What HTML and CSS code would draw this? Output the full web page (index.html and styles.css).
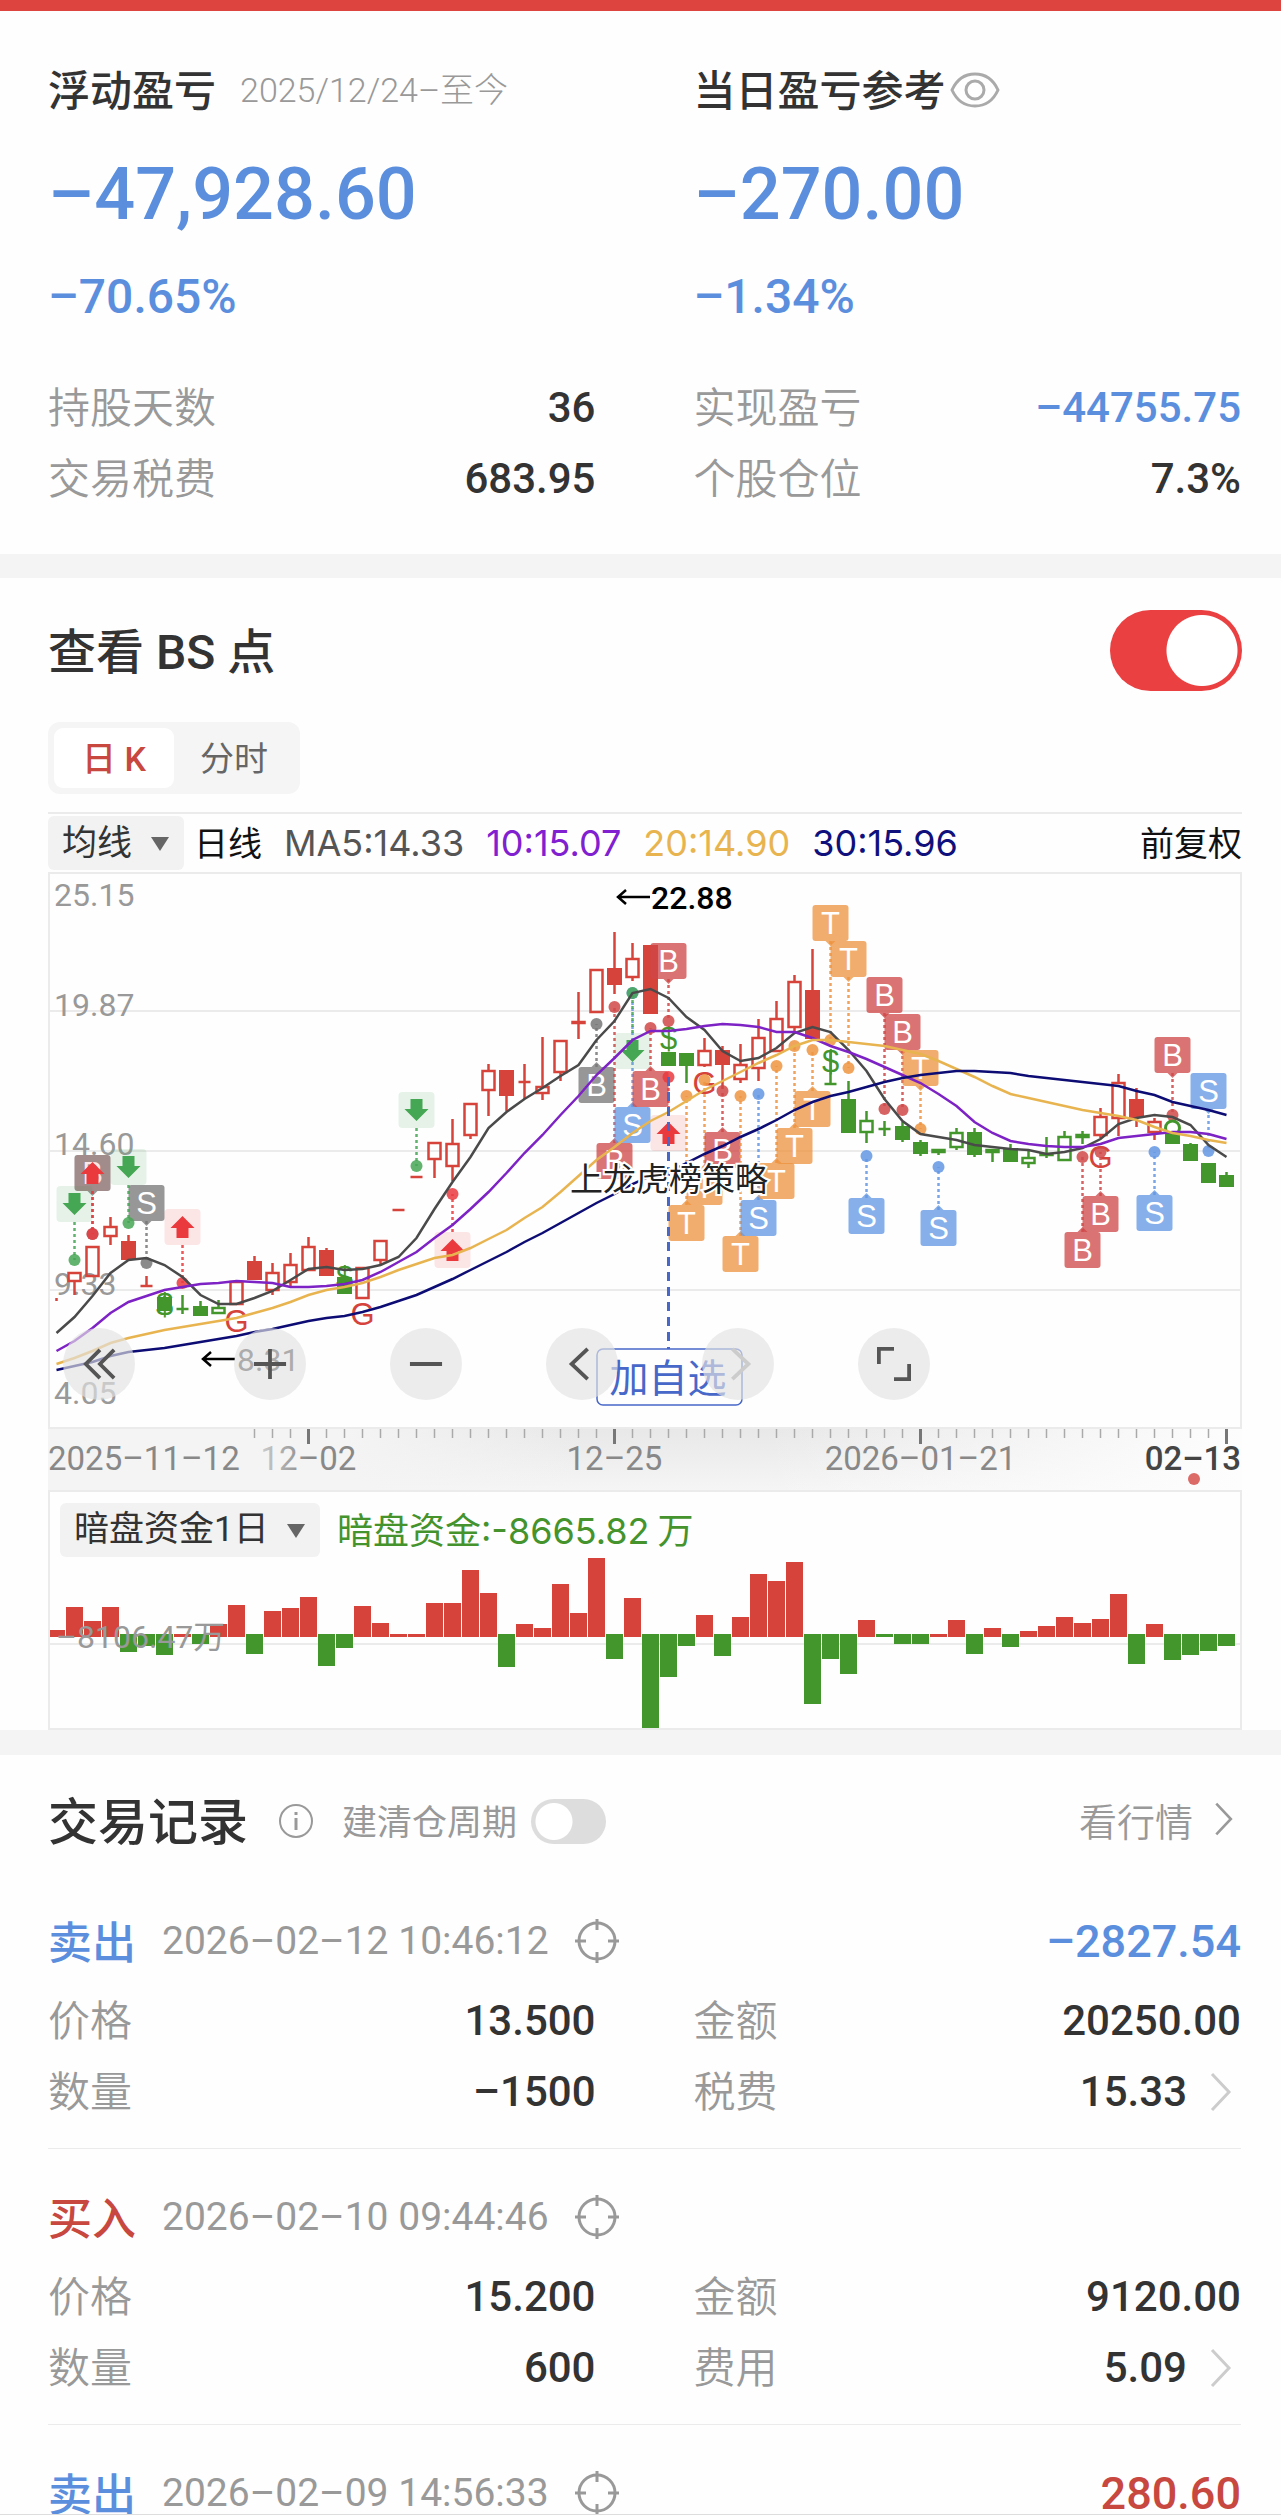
FILE: index.html
```html
<!DOCTYPE html>
<html lang="zh-CN">
<head>
<meta charset="UTF-8">
<meta name="viewport" content="width=device-width, initial-scale=1.0">
<title>个股盈亏</title>
<link rel="stylesheet" href="styles.css">
</head>
<body>

<svg width="0" height="0" class="symbols" aria-hidden="true">
  <symbol id="icon-target" viewBox="0 0 44 44">
    <g fill="none" stroke="#999" stroke-width="3">
      <circle cx="22" cy="22" r="18"/>
      <path d="M22 0v11M22 33v11M0 22h11M33 22h11"/>
    </g>
  </symbol>
  <symbol id="icon-next" viewBox="0 0 24 42">
    <path d="M3 3l17 18L3 39" fill="none" stroke="currentColor" stroke-width="3"/>
  </symbol>
</svg>

<div class="app">
  <div class="top-bar"></div>

  <!-- Profit and loss -->
  <section class="summary">
    <div class="summary-col">
      <div class="summary-title"><h2>浮动盈亏</h2><span class="period">2025/12/24–至今</span></div>
      <div class="amount">–47,928.60</div>
      <div class="percent">–70.65%</div>
      <div class="row"><span class="label">持股天数</span><span class="value">36</span></div>
      <div class="row"><span class="label">交易税费</span><span class="value">683.95</span></div>
    </div>
    <div class="summary-col">
      <div class="summary-title">
        <h2>当日盈亏参考</h2>
        <button class="icon-button eye" aria-label="显示金额">
          <svg width="50" height="36" viewBox="0 0 50 36" fill="none" stroke="#aaa" stroke-width="3">
            <path d="M2 18C7 7 15 2 25 2s18 5 23 16c-5 11-13 16-23 16S7 29 2 18z"/>
            <circle cx="25" cy="18" r="9"/>
          </svg>
        </button>
      </div>
      <div class="amount">–270.00</div>
      <div class="percent">–1.34%</div>
      <div class="row"><span class="label">实现盈亏</span><span class="value down">–44755.75</span></div>
      <div class="row"><span class="label">个股仓位</span><span class="value">7.3%</span></div>
    </div>
  </section>

  <!-- Chart -->
  <section class="chart-section">
    <div class="chart-title">
      <h2 id="bsTitle">查看 BS 点</h2>
      <input type="checkbox" class="switch" aria-labelledby="bsTitle" checked>
    </div>
    <div class="tabs">
      <button class="tab active">日 K</button>
      <button class="tab">分时</button>
    </div>

    <div class="legend">
      <div class="dropdown">
        <select aria-label="指标"><option>均线</option></select>
      </div>
      <span class="legend-name">日线</span>
      <span class="ma5">MA5:14.33</span>
      <span class="ma10">10:15.07</span>
      <span class="ma20">20:14.90</span>
      <span class="ma30">30:15.96</span>
      <span class="adjust">前复权</span>
    </div>

    <div class="kline">
      <svg id="kline" viewBox="0 0 1194 557"></svg>
      <div class="controls">
        <button aria-label="最早"><svg viewBox="0 0 36 36"><path d="M19 3L4 18l15 15M34 3L19 18l15 15"/></svg></button>
        <button aria-label="放大"><svg viewBox="0 0 36 36"><path d="M18 2v32M1 18h34"/></svg></button>
        <button aria-label="缩小"><svg viewBox="0 0 36 36"><path d="M1 18h34"/></svg></button>
        <button aria-label="左移"><svg viewBox="0 0 36 36"><path d="M24 2L7 18l17 16"/></svg></button>
        <button aria-label="右移" class="disabled"><svg viewBox="0 0 36 36"><path d="M12 2l17 16-17 16"/></svg></button>
        <button aria-label="全屏"><svg viewBox="0 0 36 36"><path d="M2 18V2h16M18 34h16V18"/></svg></button>
      </div>
    </div>
    <div class="axis"><svg id="axis" viewBox="0 0 1194 61"></svg></div>

    <div class="fund">
      <div class="fund-legend">
        <div class="dropdown">
          <select aria-label="资金指标"><option>暗盘资金1日</option></select>
        </div>
        <span class="fund-value">暗盘资金:-8665.82<span class="unit">万</span></span>
      </div>
      <svg id="fund" viewBox="0 0 1194 173"></svg>
    </div>
  </section>

  <!-- Trade records -->
  <section class="records">
    <div class="records-title">
      <h2>交易记录</h2>
      <svg class="info" width="36" height="36" viewBox="0 0 36 36" fill="none" stroke="#999">
        <circle cx="18" cy="18" r="16" stroke-width="2"/>
        <path d="M18 15v12M18 9v3" stroke-width="3"/>
      </svg>
      <label class="cycle" for="cycle">建清仓周期</label>
      <input type="checkbox" class="switch small" id="cycle">
      <a class="quote" href="#">看行情 <svg width="22" height="36"><use href="#icon-next"/></svg></a>
    </div>

    <article class="record">
      <div class="record-head">
        <span class="side sell">卖出</span>
        <span class="time">2026–02–12 10:46:12</span>
        <svg width="44" height="44"><use href="#icon-target"/></svg>
        <span class="profit down">–2827.54</span>
      </div>
      <div class="record-body">
        <div class="row"><span class="label">价格</span><span class="value">13.500</span></div>
        <div class="row"><span class="label">金额</span><span class="value">20250.00</span></div>
        <div class="row"><span class="label">数量</span><span class="value">–1500</span></div>
        <div class="row"><span class="label">税费</span><span class="value">15.33</span><svg class="more" width="24" height="42"><use href="#icon-next"/></svg></div>
      </div>
    </article>

    <article class="record">
      <div class="record-head">
        <span class="side buy">买入</span>
        <span class="time">2026–02–10 09:44:46</span>
        <svg width="44" height="44"><use href="#icon-target"/></svg>
      </div>
      <div class="record-body">
        <div class="row"><span class="label">价格</span><span class="value">15.200</span></div>
        <div class="row"><span class="label">金额</span><span class="value">9120.00</span></div>
        <div class="row"><span class="label">数量</span><span class="value">600</span></div>
        <div class="row"><span class="label">费用</span><span class="value">5.09</span><svg class="more" width="24" height="42"><use href="#icon-next"/></svg></div>
      </div>
    </article>

    <article class="record">
      <div class="record-head">
        <span class="side sell">卖出</span>
        <span class="time">2026–02–09 14:56:33</span>
        <svg width="44" height="44"><use href="#icon-target"/></svg>
        <span class="profit up">280.60</span>
      </div>
    </article>
  </section>
</div>

<script src="chart.js"></script>
</body>
</html>
```
FILE: styles.css
```css
* {
  box-sizing: border-box;
}
body {
  margin: 0;
  background-color: #fefefe;
  color: #333;
  font-family: Roboto, "Noto Sans CJK SC", sans-serif;
}
h2 {
  margin: 0;
  padding-bottom: 6px;
  font-weight: 500;
}
button,
select {
  margin: 0;
  border: none;
  color: inherit;
  font-family: inherit;
  cursor: pointer;
}
svg {
  display: block;
}
.symbols {
  position: absolute;
}
.app {
  height: 100vh;
  overflow-y: auto;
  scrollbar-width: none;
  border-bottom: 1px solid #ddd;
}
.top-bar {
  height: 11px;
  background-color: #dd4440;
}

/* Shared label / value rows */
.row {
  display: flex;
  align-items: center;
  height: 71px;
  font-size: 42px;
}
.label {
  padding-bottom: 6px;
  color: #999;
  font-weight: 350;
}
.value {
  margin-left: auto;
  font-weight: 500;
}
.down,
.sell {
  color: #5b8fde;
}
.up,
.buy {
  color: #c8473f;
}

/* Summary */
.summary {
  display: grid;
  grid-template-columns: 1fr 1fr;
  gap: 98px;
  padding: 49px 40px 40px 48px;
  border-bottom: 24px solid #f4f4f4;
}
.summary-title {
  display: flex;
  align-items: center;
  height: 60px;
}
.summary-title h2 {
  font-size: 42px;
}
.period {
  margin-left: 24px;
  padding-bottom: 5px;
  color: #999;
  font-size: 34px;
  font-weight: 300;
}
.icon-button {
  padding: 0;
  background: none;
}
.eye {
  margin-left: 4px;
}
.amount {
  margin: 33px 0 30px;
  color: #5b8fde;
  font-size: 72px;
  font-weight: 500;
  line-height: 84px;
}
.percent {
  margin-bottom: 45px;
  color: #5b8fde;
  font-size: 48px;
  font-weight: 500;
  line-height: 60px;
}

/* Switches */
.switch {
  appearance: none;
  flex: none;
  width: 132px;
  height: 81px;
  margin: 0;
  border-radius: 41px;
  background: radial-gradient(circle at 92px 50%, #fff 35px, transparent 36px) #ea4041;
}
.switch.small {
  width: 75px;
  height: 45px;
  margin-left: 14px;
  border-radius: 23px;
  background: radial-gradient(circle at 23px 50%, #fff 18px, transparent 19px) #ddd;
}

/* Chart */
.chart-section {
  padding: 32px 39px 0 48px;
  border-bottom: 25px solid #f4f4f4;
}
.chart-title {
  display: flex;
  align-items: center;
  justify-content: space-between;
}
.chart-title h2 {
  font-size: 48px;
}
.tabs {
  display: inline-flex;
  height: 72px;
  margin: 31px 0 18px;
  padding: 6px;
  border-radius: 12px;
  background-color: #f5f5f5;
  vertical-align: top;
}
.tab {
  width: 120px;
  padding: 0 0 3px;
  border-radius: 9px;
  background: none;
  color: #666;
  font-size: 34px;
}
.tab.active {
  background-color: #fff;
  color: #c8473f;
  font-weight: 500;
}
.legend {
  display: flex;
  align-items: center;
  height: 60px;
  border-top: 2px solid #ebebeb;
  color: #111;
  font-size: 34px;
  white-space: nowrap;
}
.dropdown {
  position: relative;
}
.dropdown::after {
  content: "";
  position: absolute;
  top: 21px;
  right: 15px;
  border: 9px solid transparent;
  border-top: 14px solid #666;
  border-bottom: none;
  pointer-events: none;
}
.dropdown select {
  appearance: none;
  height: 54px;
  padding: 0 51px 0 14px;
  border-radius: 6px;
  background-color: #f2f2f2;
  color: #333;
  font-size: 35px;
}
.legend-name {
  margin: 0 22px 0 10px;
}
.legend-name,
.adjust {
  padding-bottom: 4px;
}
.ma5,
.ma10,
.ma20,
.ma30 {
  margin-right: 22px;
  font-family: Inter, sans-serif;
  font-size: 36px;
}
.ma5 { color: #555; }
.ma10 { color: #8020d0; }
.ma20 { color: #e8b450; }
.ma30 { color: #10107c; }
.adjust {
  margin-left: auto;
}
.kline {
  position: relative;
}
.kline,
.fund {
  outline: 2px solid #ebebeb;
  outline-offset: -2px;
}
.kline > svg,
.axis svg,
.fund > svg {
  width: 100%;
}
.controls {
  position: absolute;
  left: 15px;
  bottom: 29px;
  display: flex;
  gap: 84px;
}
.controls button {
  display: grid;
  place-items: center;
  width: 72px;
  height: 72px;
  padding: 0;
  border-radius: 50%;
  background-color: rgba(226, 226, 226, 0.66);
}
.controls button:first-child {
  margin-right: 15px;
}
.controls svg {
  width: 34px;
  height: 34px;
  fill: none;
  stroke: #555;
  stroke-width: 4;
}
.controls .disabled svg {
  stroke: #ccc;
}
.axis {
  background: linear-gradient(90deg, #f4f4f4 25%, rgba(244, 244, 244, 0) 45% 60%, #fdfdfd), linear-gradient(#e8e8e8, #f5f5f5);
}
.fund-legend {
  display: flex;
  align-items: center;
  height: 67px;
  padding: 12px 12px 0;
}
.fund-value {
  margin-left: 17px;
  padding-bottom: 3px;
  color: #44932c;
  font-family: Inter, "Noto Sans CJK SC", sans-serif;
  font-size: 36px;
}
.unit {
  margin-left: 8px;
}

/* Records */
.records {
  padding: 36px 40px 0 48px;
}
.records-title {
  display: flex;
  align-items: center;
  height: 60px;
  margin-bottom: 22px;
}
.records-title h2 {
  font-size: 50px;
}
.info {
  margin-left: 30px;
}
.cycle {
  margin-left: 28px;
  padding-bottom: 4px;
  color: #999;
  font-size: 35px;
}
.quote {
  display: flex;
  align-items: center;
  gap: 20px;
  margin: 0 6px 0 auto;
  padding-bottom: 4px;
  color: #999;
  font-size: 38px;
  font-weight: 350;
  text-decoration: none;
}
.record {
  padding: 44px 0 21px;
  border-bottom: 1px solid #ebebeb;
}
.record:last-child {
  padding-bottom: 0;
  border-bottom: none;
}
.record-head {
  display: flex;
  align-items: center;
  height: 48px;
}
.side {
  padding-bottom: 3px;
  font-size: 44px;
  font-weight: 500;
}
.time {
  margin: 0 26px;
  color: #999;
  font-size: 39px;
}
.profit {
  margin-left: auto;
  font-size: 45px;
  font-weight: 500;
}
.record-body {
  display: grid;
  grid-template-columns: 1fr 1fr;
  column-gap: 98px;
  margin-top: 20px;
}
.more {
  margin: 0 8px 0 22px;
  color: #ccc;
}

/* SVG text */
.scale {
  fill: #999;
  font-size: 32px;
}
.date {
  fill: #888;
  font-size: 33px;
}
.date.last {
  fill: #444;
  font-weight: 500;
}
.peak {
  font-size: 32px;
  font-weight: 500;
}
.tag,
.sign {
  font-family: "Liberation Sans", sans-serif;
  font-size: 31px;
  text-anchor: middle;
}
.tag {
  fill: #fff;
}
.strategy {
  fill: #222;
  stroke: #fff;
  stroke-width: 4;
  paint-order: stroke;
  font-size: 33px;
  text-anchor: middle;
}
.watch {
  fill: #4767c9;
  font-size: 39px;
  text-anchor: middle;
}
```
FILE: chart.js
```javascript
var RED = "#d5433b";
var GREEN = "#43962b";
var STEP = 18;

function cx(i) {
  return 8.5 + i * STEP;
}

// [colour, filled, high, top, bottom, low]
var candles = [
  ["r", 0, 424, 424, 426, 429], ["r", 0, 400, 400, 410, 423], ["r", 0, 374, 374, 405, 405],
  ["r", 0, 345, 354, 365, 373], ["r", 1, 363, 369, 388, 388], ["r", 0, 404, 414, 415, 415],
  ["g", 1, 424, 425, 439, 439], ["g", 0, 423, 437, 438, 442], ["g", 1, 429, 434, 444, 444],
  ["g", 0, 428, 435, 442, 442], ["r", 0, 409, 409, 433, 433], ["r", 1, 384, 389, 408, 408],
  ["r", 0, 391, 400, 419, 423], ["r", 0, 381, 392, 411, 415], ["r", 0, 365, 374, 399, 399],
  ["r", 1, 376, 378, 404, 404], ["g", 1, 405, 405, 422, 422], ["r", 0, 395, 395, 427, 427],
  ["r", 0, 368, 368, 389, 393], ["r", 0, 338, 338, 339, 339], ["r", 0, 305, 305, 306, 306],
  ["r", 0, 270, 270, 288, 306], ["r", 0, 247, 271, 295, 309], ["r", 0, 231, 231, 264, 267],
  ["r", 0, 192, 198, 219, 244], ["r", 1, 198, 198, 224, 239], ["r", 0, 192, 210, 211, 227],
  ["r", 0, 165, 214, 222, 228], ["r", 0, 168, 168, 201, 209], ["r", 0, 120, 149, 152, 167],
  ["r", 0, 97, 97, 141, 141], ["r", 1, 60, 96, 113, 122], ["r", 0, 71, 86, 106, 109],
  ["r", 1, 73, 73, 142, 142], ["g", 1, 180, 180, 194, 194], ["g", 1, 181, 181, 194, 211],
  ["r", 0, 166, 178, 194, 195], ["r", 1, 174, 178, 193, 217], ["r", 0, 172, 192, 208, 211],
  ["r", 0, 147, 165, 197, 209], ["r", 0, 129, 146, 180, 180], ["r", 0, 103, 109, 156, 161],
  ["r", 1, 77, 118, 167, 167], ["g", 0, 178, 212, 213, 213], ["g", 1, 209, 227, 261, 261],
  ["g", 0, 239, 248, 261, 271], ["g", 0, 249, 257, 258, 264], ["g", 1, 250, 254, 268, 270],
  ["g", 1, 268, 270, 282, 284], ["g", 0, 277, 277, 281, 283], ["g", 0, 256, 260, 276, 278],
  ["g", 1, 256, 260, 283, 285], ["g", 0, 277, 277, 281, 290], ["g", 1, 272, 276, 290, 290],
  ["g", 0, 279, 285, 292, 296], ["g", 0, 265, 281, 284, 286], ["g", 0, 259, 264, 289, 289],
  ["g", 0, 259, 262, 266, 272], ["r", 0, 236, 244, 264, 266], ["r", 0, 202, 210, 247, 264],
  ["r", 1, 216, 227, 246, 255], ["r", 0, 246, 249, 261, 268], ["g", 1, 261, 261, 272, 272],
  ["g", 1, 271, 272, 289, 289], ["g", 1, 291, 291, 311, 311], ["g", 1, 300, 303, 315, 315]
];

var averages = [
  ["#4a4a4a", [461, 445, 424, 401, 388, 386, 393, 405, 423, 432, 432, 426, 419, 408, 397, 395, 398, 397, 393, 385, 366, 337, 310, 285, 256, 240, 227, 216, 204, 193, 168, 149, 121, 117, 126, 145, 158, 179, 189, 186, 176, 161, 155, 160, 178, 199, 227, 249, 262, 265, 268, 273, 275, 277, 278, 282, 280, 276, 267, 252, 246, 243, 245, 253, 273, 285]],
  ["#7d22c4", [479, 469, 456, 441, 430, 424, 418, 415, 412, 411, 409, 410, 411, 415, 415, 414, 412, 408, 400, 390, 380, 366, 353, 337, 320, 301, 281, 263, 243, 224, 203, 186, 168, 159, 159, 157, 154, 152, 153, 155, 160, 160, 166, 174, 180, 187, 195, 203, 211, 222, 234, 250, 261, 269, 272, 274, 275, 275, 272, 266, 264, 262, 260, 260, 262, 267]],
  ["#e8b450", [492, 486, 479, 471, 466, 462, 458, 455, 452, 449, 446, 441, 436, 430, 423, 418, 415, 411, 405, 398, 392, 386, 383, 376, 367, 358, 346, 335, 320, 304, 288, 275, 261, 249, 240, 229, 218, 209, 200, 191, 183, 174, 168, 168, 170, 172, 174, 178, 182, 189, 197, 205, 214, 222, 226, 230, 234, 238, 241, 244, 248, 255, 261, 264, 268, 271]],
  ["#0c0c74", [498, 494, 490, 484, 480, 478, 476, 473, 470, 467, 464, 460, 457, 453, 449, 446, 444, 440, 435, 429, 423, 415, 407, 398, 389, 380, 370, 361, 351, 341, 331, 322, 312, 304, 300, 291, 282, 274, 265, 257, 248, 238, 230, 224, 220, 215, 210, 206, 203, 201, 199, 199, 200, 201, 204, 206, 208, 210, 212, 214, 219, 223, 230, 234, 238, 243]]
];

// [index, kind, box centre, dot centre]
var markers = [
  [2, "X", 301, 362], [5, "Y", 331, 391], [1, "down", 332, 388], [2, "up", 301, 362],
  [4, "down", 295, 351], [7, "up", 355, 411], [20, "down", 238, 294], [22, "up", 378, 322],
  [30, "X", 213, 152], [31, "B", 289, 135], [32, "S", 253, 121], [32, "down", 179, 121],
  [33, "B", 217, 156], [34, "B", 89, 149], [34, "up", 261, 205], [36, "T", 315, 208],
  [35, "T", 351, 224], [37, "B", 278, 219], [38, "T", 382, 224], [39, "S", 346, 222],
  [40, "T", 309, 194], [41, "T", 274, 174], [42, "T", 237, 178], [43, "T", 51, 168],
  [44, "T", 87, 196], [45, "S", 344, 284], [46, "B", 123, 237], [47, "B", 160, 238],
  [48, "T", 196, 257], [49, "S", 356, 295], [57, "B", 378, 285], [58, "B", 342, 280],
  [61, "S", 341, 280], [62, "B", 183, 243], [64, "S", 219, 279]
];
var kinds = {
  B: ["B", "#d04848"],
  S: ["S", "#6397e4"],
  T: ["T", "#ee9440"],
  X: ["B", "#777"],
  Y: ["S", "#777"]
};

// [index, glyph, centre]
var signs = [
  [6, "$", 432], [10, "G", 449], [16, "$", 405], [17, "G", 442], [34, "$", 166],
  [36, "G", 211], [43, "$", 189], [58, "G", 285]
];

var funds = [7, 30, 16, 30, -18, -12, -21, 3, -10, 13, 32, -20, 26, 29, 40, -32, -14, 31, 14, 3, 3, 34, 34, 67, 44, -33, 13, 9, 53, 24, 79, -25, 39, -96, -43, -12, 22, -22, 20, 63, 56, 75, -70, -25, -40, 17, -3, -10, -10, 3, 17, -20, 9, -13, 6, 11, 20, 14, 18, 43, -30, 13, -26, -21, -17, -12];

function line(x1, y1, x2, y2, attrs) {
  return '<line x1="' + x1 + '" y1="' + y1 + '" x2="' + x2 + '" y2="' + y2 + '" ' + attrs + '/>';
}

function rect(x, y, w, h, attrs) {
  return '<rect x="' + x + '" y="' + y + '" width="' + w + '" height="' + h + '" ' + attrs + '/>';
}

function text(x, y, cls, value, attrs) {
  return '<text x="' + x + '" y="' + y + '" class="' + cls + '" ' + (attrs || "") + '>' + value + '</text>';
}

function drawCandle(c, i) {
  var color = c[0] === "r" ? RED : GREEN;
  var stroke = 'stroke="' + color + '" stroke-width="2.5"';
  var x = cx(i);
  var out = line(x, c[2], x, c[3], stroke) + line(x, c[4], x, c[5], stroke);
  if (c[1]) {
    return out + rect(x - 7.5, c[3], 15, c[4] - c[3], 'fill="' + color + '"');
  }
  if (c[4] - c[3] < 2) {
    return out + line(x - 6, c[3], x + 6, c[3], stroke);
  }
  return out + rect(x - 6, c[3] + 1, 12, c[4] - c[3] - 2, 'fill="none" ' + stroke);
}

function drawMarker(m) {
  var x = cx(m[0]);
  var y = m[2];
  var arrow = m[1] === "up" || m[1] === "down";
  var color = arrow ? (m[1] === "up" ? "#ea3a3e" : "#45a653") : kinds[m[1]][1];
  var dir = m[3] > y ? 1 : -1;
  var edge = y + 18 * dir;
  var out = line(x, edge, x, m[3], 'stroke="' + color + '" stroke-width="2.5" stroke-dasharray="3 3" opacity="0.85"');
  out += '<circle cx="' + x + '" cy="' + m[3] + '" r="6" fill="' + color + '" opacity="0.85"/>';
  if (arrow) {
    var up = m[1] === "up" ? -1 : 1;
    out += rect(x - 18, y - 18, 36, 36, 'rx="4" fill="' + color + '" opacity="0.13"');
    out += '<path fill="' + color + '" d="M' + (x - 6) + ' ' + (y - 11 * up) + 'h12v' + 10 * up + 'h6l-12 ' + 12 * up + 'l-12 ' + -12 * up + 'h6z"/>';
    return out;
  }
  out += '<g fill="' + color + '" opacity="0.76">' + rect(x - 18, y - 18, 36, 36, 'rx="3"');
  out += '<path d="M' + (x - 5) + ' ' + edge + 'h10l-5 ' + 5 * dir + 'z"/></g>';
  return out + text(x, y + 11, "tag", kinds[m[1]][0]);
}

function drawKline() {
  var out = "";
  [139, 279, 418].forEach(function (y) {
    out += line(0, y, 1194, y, 'stroke="#ebebeb" stroke-width="2"');
  });
  [["25.15", 34], ["19.87", 144], ["14.60", 283], ["9.33", 423], ["4.05", 532]].forEach(function (s) {
    out += text(6, s[1], "scale", s[0]);
  });

  out += candles.map(drawCandle).join("");
  signs.forEach(function (s) {
    out += text(cx(s[0]), s[2] + 11, "sign", s[1], 'fill="' + (s[1] === "G" ? RED : GREEN) + '"');
  });
  out += markers.map(drawMarker).join("");
  out += '<circle cx="' + cx(62) + '" cy="256" r="7" fill="none" stroke="' + GREEN + '" stroke-width="3"/>';
  averages.forEach(function (a) {
    var points = a[1].map(function (y, i) {
      return cx(i) + "," + y;
    });
    out += '<polyline points="' + points.join(" ") + '" fill="none" stroke="' + a[0] + '" stroke-width="2.5"/>';
  });

  // Highest and lowest price
  out += '<path d="M602 25h-32m8-7l-8 7 8 7M187 487h-32m8-7l-8 7 8 7" fill="none" stroke="#000" stroke-width="2.5"/>';
  out += text(603, 37, "peak", "22.88") + text(189, 499, "scale", "8.31", 'style="fill: #444"');

  // Events
  out += line(cx(34), 205, cx(34), 477, 'stroke="#4767c9" stroke-width="3" stroke-dasharray="9 6"');
  out += rect(549, 477, 145, 56, 'rx="6" fill="none" stroke="#4767c9" stroke-width="1.5"');
  out += text(620, 520, "watch", "加自选") + text(621, 319, "strategy", "上龙虎榜策略");
  document.getElementById("kline").innerHTML = out;
}

function drawAxis() {
  var out = '<defs><linearGradient id="fade"><stop offset="0" stop-color="#ccc"/><stop offset="0.5" stop-color="#888"/></linearGradient></defs>';
  var major = [14, 31, 48, 65];
  for (var i = 11; i < candles.length; i++) {
    var big = major.indexOf(i) !== -1;
    out += line(cx(i), 0, cx(i), big ? 15 : 9, 'stroke="' + (big ? "#777" : "#aaa") + '" stroke-width="' + (big ? 3 : 1.5) + '"');
  }
  out += text(0, 41, "date", "2025–11–12");
  out += text(cx(14), 41, "date", "12–02", 'text-anchor="middle" style="fill: url(#fade)"');
  out += text(cx(31), 41, "date", "12–25", 'text-anchor="middle"');
  out += text(cx(48), 41, "date", "2026–01–21", 'text-anchor="middle"');
  out += text(1193, 41, "date last", "02–13", 'text-anchor="end"');
  out += '<circle cx="1146" cy="50" r="6" fill="#dc6a66"/>';
  document.getElementById("axis").innerHTML = out;
}

function drawFund() {
  var out = line(0, 87, 1194, 87, 'stroke="#ebebeb" stroke-width="2"');
  funds.forEach(function (v, i) {
    var y = v > 0 ? 80 - v : 77;
    out += rect(cx(i) - 8.5, y, 17, Math.abs(v), 'fill="' + (v > 0 ? RED : GREEN) + '"');
  });
  out += text(8, 91, "scale", "–8106.47万");
  document.getElementById("fund").innerHTML = out;
}

drawKline();
drawAxis();
drawFund();
```
